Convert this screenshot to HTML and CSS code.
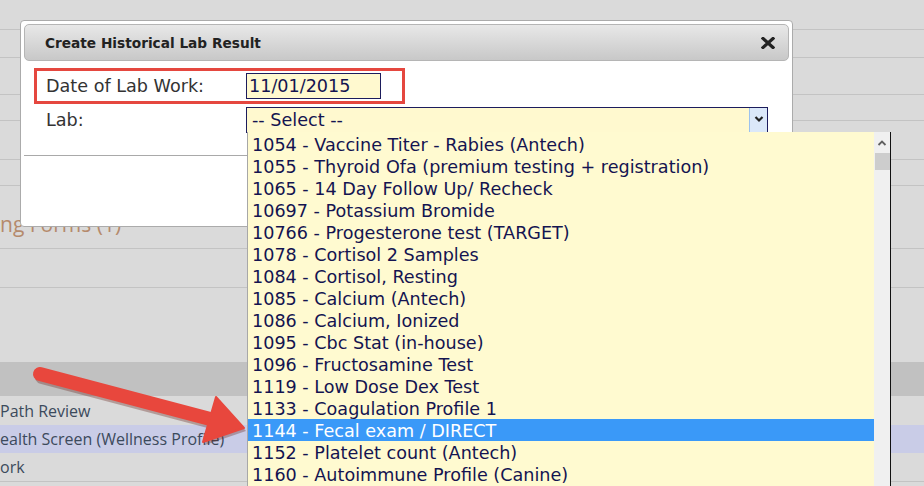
FILE: index.html
```html
<!DOCTYPE html>
<html>
<head>
<meta charset="utf-8">
<link rel="stylesheet" href="styles.css">
</head>
<body>
<div class="page">
  <div class="bg">
    <div class="r r29"></div>
    <div class="r r27"></div>
    <div class="r r36"></div>
    <div class="r r25"></div>
    <div class="r r38"></div>
    <div class="r r25"></div>
    <div class="r r63 forms"><span>ng Forms (1)</span></div>
    <div class="r r38"></div>
    <div class="r74"></div>
    <div class="band"></div>
    <div class="item">Path Review</div>
    <div class="item sel">ealth Screen (Wellness Profile)</div>
    <div class="item last">ork</div>
  </div>

  <div class="dialog">
    <div class="titlebar">
      <span class="title">Create Historical Lab Result</span>
      <svg class="close" width="14" height="12" viewBox="0 0 14 12"><path d="M2 1.5 L12 10.5 M12 1.5 L2 10.5" stroke="#222" stroke-width="3.2" stroke-linecap="square"/></svg>
    </div>
    <div class="datebox">
      <span class="label">Date of Lab Work:</span>
      <div class="dateinput">11/01/2015</div>
    </div>
    <div class="labrow">
      <span class="label">Lab:</span>
      <div class="select">
        <span class="seltext">-- Select --</span>
        <span class="selbtn"><svg width="16" height="22" viewBox="0 0 16 22"><polyline points="4.5,9 8,12.5 11.5,9" fill="none" stroke="#222" stroke-width="2.2"/></svg></span>
      </div>
    </div>
    <div class="sep"></div>
  </div>

  <div class="dropdown">
    <div class="opts">
      <div class="opt">1054 - Vaccine Titer - Rabies (Antech)</div>
      <div class="opt">1055 - Thyroid Ofa (premium testing + registration)</div>
      <div class="opt">1065 - 14 Day Follow Up/ Recheck</div>
      <div class="opt">10697 - Potassium Bromide</div>
      <div class="opt">10766 - Progesterone test (TARGET)</div>
      <div class="opt">1078 - Cortisol 2 Samples</div>
      <div class="opt">1084 - Cortisol, Resting</div>
      <div class="opt">1085 - Calcium (Antech)</div>
      <div class="opt">1086 - Calcium, Ionized</div>
      <div class="opt">1095 - Cbc Stat (in-house)</div>
      <div class="opt">1096 - Fructosamine Test</div>
      <div class="opt">1119 - Low Dose Dex Test</div>
      <div class="opt">1133 - Coagulation Profile 1</div>
      <div class="opt hl">1144 - Fecal exam / DIRECT</div>
      <div class="opt">1152 - Platelet count (Antech)</div>
      <div class="opt">1160 - Autoimmune Profile (Canine)</div>
    </div>
    <div class="scroll">
      <svg class="up" width="16" height="20" viewBox="0 0 16 20"><polyline points="4.5,12 8,8.5 11.5,12" fill="none" stroke="#606060" stroke-width="1.8"/></svg>
      <div class="thumb"></div>
    </div>
  </div>

  <svg class="arrow" width="924" height="486" viewBox="0 0 924 486">
    <g transform="translate(2,3)" opacity="0.35">
      <line x1="40" y1="374" x2="214" y2="420" stroke="#6b2a22" stroke-width="14" stroke-linecap="round"/>
      <polygon points="216,397 244,428 203,442" fill="#6b2a22"/>
    </g>
    <line x1="40" y1="374" x2="214" y2="420" stroke="#e8473d" stroke-width="14" stroke-linecap="round"/>
    <polygon points="216,397 244,428 203,442" fill="#e8473d" stroke="#e8473d" stroke-width="2" stroke-linejoin="round"/>
  </svg>
</div>
</body>
</html>
```
FILE: styles.css
```css
html, body {
  margin: 0;
  padding: 0;
  width: 924px;
  height: 486px;
  overflow: hidden;
}
.page {
  position: relative;
  width: 924px;
  height: 486px;
  background: #dadada;
  overflow: hidden;
  font-family: "DejaVu Sans", Verdana, sans-serif;
}
.bg {
  display: flex;
  flex-direction: column;
}
.r {
  border-bottom: 1px solid #c3c3c3;
  flex: none;
}
.r29 { height: 29px; }
.r27 { height: 27px; }
.r36 { height: 36px; }
.r25 { height: 25px; }
.r38 { height: 38px; }
.r63 { height: 63px; }
.r74 { height: 74px; flex: none; }
.forms {
  display: flex;
  align-items: flex-end;
  font-family: "Open Sans", sans-serif;
  font-size: 21px;
  color: #b58a6c;
  line-height: 24px;
  box-sizing: border-box;
}
.forms span {
  margin-bottom: 12px;
}
.band {
  height: 34px;
  background: #c1c1c1;
  flex: none;
}
.item {
  height: 29px;
  line-height: 31px;
  font-family: "Open Sans", sans-serif;
  font-size: 16px;
  color: #3c4a5c;
  flex: none;
}
.item.sel {
  height: 28px;
  line-height: 28px;
  background: #c9cce7;
}
.item.last {
  height: 28px;
  line-height: 28px;
  border-bottom: 1px solid #c3c3c3;
}

.dialog {
  position: absolute;
  left: 20px;
  top: 20px;
  width: 773px;
  height: 207px;
  box-sizing: border-box;
  background: #fff;
  border: 1px solid #ababab;
  border-radius: 4px;
  padding: 3px;
}
.titlebar {
  height: 37px;
  box-sizing: border-box;
  border: 1px solid #b5b5b5;
  border-radius: 5px;
  background: linear-gradient(#e8e8e8, #c8c8c8);
  display: flex;
  align-items: center;
  justify-content: space-between;
  padding: 1px 13px 0 20px;
}
.title {
  font-weight: bold;
  font-size: 13.7px;
  color: #222;
}
.close {
  display: block;
}
.datebox {
  margin: 7px 0 0 10px;
  width: 371px;
  height: 36px;
  box-sizing: border-box;
  border: 3px solid #e5473f;
  display: flex;
  align-items: center;
  padding-left: 9px;
}
.label {
  width: 200px;
  flex: none;
  font-size: 17.6px;
  color: #333;
}
.dateinput {
  width: 135px;
  height: 26px;
  box-sizing: border-box;
  border: 1.5px solid #1c1c5c;
  background: #fff9cf;
  font-size: 17.6px;
  color: #141450;
  line-height: 24px;
  padding-left: 2px;
}
.labrow {
  margin: 3px 0 0 22px;
  display: flex;
  align-items: center;
}
.select {
  width: 522px;
  height: 26px;
  box-sizing: border-box;
  border: 1.5px solid #1c1c5c;
  background: #fff9cf;
  display: flex;
  justify-content: space-between;
}
.seltext {
  font-size: 17.6px;
  color: #141450;
  line-height: 24px;
  padding-left: 5px;
}
.selbtn {
  width: 17px;
  background: #dbe8f9;
  border-left: 1px solid #9cc2ee;
  display: flex;
  justify-content: center;
}
.sep {
  margin-top: 22px;
  height: 1px;
  background: #a9a9a9;
}

.dropdown {
  position: absolute;
  left: 247px;
  top: 132px;
  width: 644px;
  height: 360px;
  box-sizing: border-box;
  border-left: 1px solid #a7a7a7;
  border-right: 1px solid #111;
  display: flex;
  background: #fffad0;
}
.opts {
  flex: 1;
  padding-top: 1px;
}
.opt {
  height: 22px;
  line-height: 24px;
  padding-left: 4px;
  font-size: 17.6px;
  color: #141450;
  white-space: nowrap;
  overflow: hidden;
}
.opt.hl {
  background: #3a99f8;
  color: #fff;
}
.scroll {
  width: 16px;
  background: #f0f0f0;
  display: flex;
  flex-direction: column;
  align-items: center;
}
.up {
  display: block;
  margin-top: 1px;
}
.thumb {
  width: 15px;
  height: 17px;
  background: #cdcdcd;
}
.arrow {
  position: absolute;
  left: 0;
  top: 0;
  pointer-events: none;
}
```
